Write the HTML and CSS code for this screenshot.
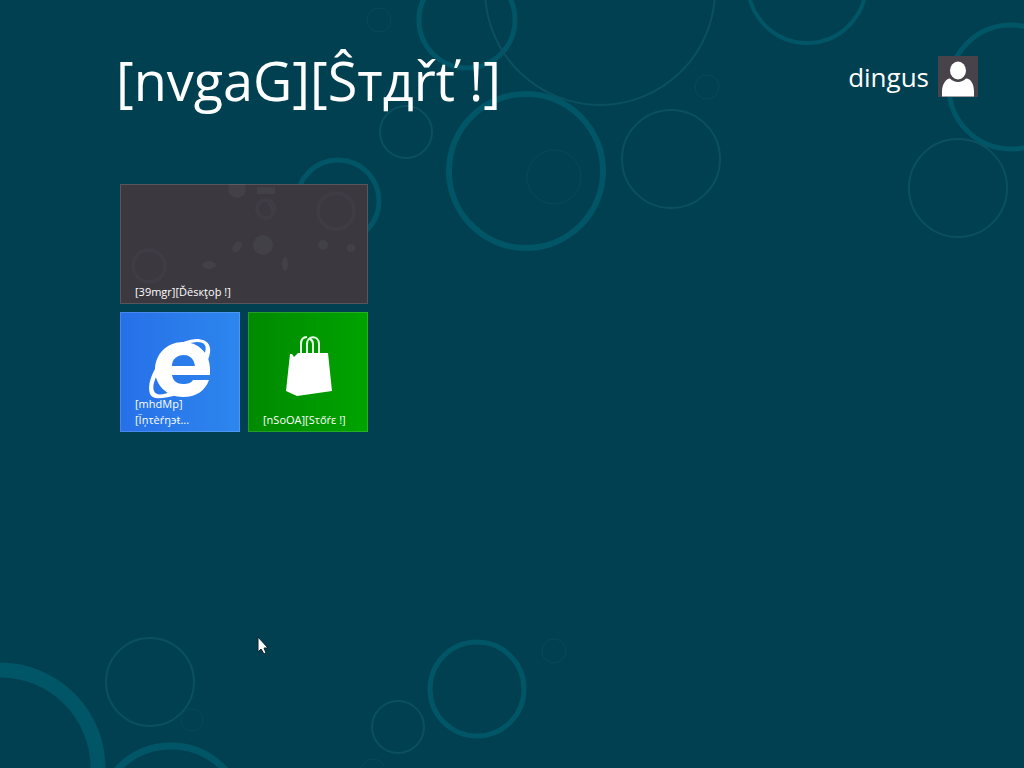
FILE: index.html
```html
<!DOCTYPE html>
<html lang="en">
<head>
    <meta charset="UTF-8">
    <meta name="viewport" content="width=device-width, initial-scale=1.0">
    <title>Start</title>
    <link rel="stylesheet" href="styles.css">
</head>
<body>
    <!-- Bubble wallpaper -->
    <svg class="wallpaper" viewBox="0 0 1024 768" preserveAspectRatio="xMidYMid slice" aria-hidden="true">
        <g class="bubble-bold">
            <circle cx="467" cy="20" r="48" stroke-width="5"/>
            <circle cx="526" cy="171" r="77" stroke-width="6"/>
            <circle cx="807" cy="-16" r="59" stroke-width="4"/>
            <circle cx="1011" cy="87" r="62" stroke-width="5"/>
            <circle cx="338" cy="201" r="41" stroke-width="5"/>
            <circle cx="0" cy="768" r="98" stroke-width="15"/>
            <circle cx="171" cy="819" r="73" stroke-width="7"/>
            <circle cx="477" cy="689" r="47" stroke-width="5"/>
        </g>
        <g class="bubble-thin">
            <circle cx="600" cy="-10" r="115"/>
            <circle cx="406" cy="132" r="26"/>
            <circle cx="671" cy="159" r="49"/>
            <circle cx="958" cy="188" r="49"/>
            <circle cx="150" cy="682" r="44"/>
            <circle cx="398" cy="727" r="26"/>
        </g>
        <g class="bubble-faint">
            <circle cx="379" cy="20" r="12"/>
            <circle cx="554" cy="177" r="27"/>
            <circle cx="707" cy="87" r="12"/>
            <circle cx="192" cy="720" r="11"/>
            <circle cx="554" cy="651" r="12"/>
            <circle cx="373" cy="771" r="12"/>
        </g>
    </svg>

    <div class="screen">
        <header class="header">
            <h1>[nvgaG][Ŝтдřť !]</h1>
            <button type="button" class="user">
                <span>dingus</span>
                <svg class="avatar" viewBox="0 0 40 40" aria-hidden="true">
                    <path d="M4 40V35C4 28 8 22 12 22C16 26.500 24 26.500 28 22C33 22 36 28 36 35V40Z"/>
                    <ellipse cx="20" cy="14" rx="8" ry="9"/>
                </svg>
            </button>
        </header>

        <main class="tiles">
            <a href="#" class="tile desktop">
                <svg class="tile-icon" viewBox="0 0 248 120" aria-hidden="true">
                    <circle cx="117" cy="5" r="9"/>
                    <circle cx="143" cy="61" r="10"/>
                    <ellipse cx="117" cy="63" rx="4" ry="6" transform="rotate(35 117 63)"/>
                    <ellipse cx="89" cy="81" rx="7" ry="4"/>
                    <ellipse cx="165" cy="80" rx="3" ry="7"/>
                    <circle cx="203" cy="61" r="5"/>
                    <circle cx="231" cy="64" r="4"/>
                    <path d="M137 3h18v7h-18zM146 17q14 8 2 20q8-10-2-20z"/>
                    <circle class="ring" cx="29" cy="82" r="16"/>
                    <circle class="ring" cx="216" cy="27" r="18"/>
                    <circle class="ring" cx="146" cy="25" r="9"/>
                </svg>
                <span class="label">[39mgr][Ďēsкţoþ !]</span>
            </a>
            <a href="#" class="tile internet">
                <svg class="tile-icon" viewBox="0 0 120 120" aria-hidden="true">
                    <path fill-rule="evenodd" d="M63 30C79 30 90 42 90 57V63H52C53 69 57 72 63 72C68 72 71 71 73 68H89C85 79 76 85 63 85C47 85 35 73 35 58C35 42 47 30 63 30ZM52 54H75C74 47 70 43 64 43C57 43 52 47 52 54Z"/>
                    <path d="M37 51C47 37 62 28 76 27C90 27 93 36 88 48L84 43C88 34 85 30 77 30C63 31 48 38 37 51Z"/>
                    <path d="M42 47C31 60 27 74 30 82C33 89 44 86 58 83L53 79C43 83 36 84 34 79C32 74 35 66 39 60Z"/>
                </svg>
                <span class="label">[mhdMp]<br>[Ĩņτèŕŋэŧ...</span>
            </a>
            <a href="#" class="tile store">
                <svg class="tile-icon" viewBox="0 0 120 120" aria-hidden="true">
                    <path d="M42 42L44 42L46 45L50 41H80L84 79L49 84L38 79Z"/>
                    <path class="handle" d="M53 41V32C53 27 55 25 59 25M59 41V32C59 23 71 23 71 32V41M65 41V32C65 29 64 28 62 27"/>
                </svg>
                <span class="label">[nSoOA][Sτőŕε !]</span>
            </a>
        </main>
    </div>

    <svg class="cursor" viewBox="0 0 12 19" aria-hidden="true">
        <path d="M1 1V16L4 13L7 18L9 17L7 12H11Z"/>
    </svg>
</body>
</html>
```
FILE: styles.css
```css
* {
    box-sizing: border-box;
}
body {
    margin: 0;
    min-height: 100vh;
    overflow: hidden;
    background: #004050;
    color: #fff;
    font-family: "Segoe UI", "Open Sans", "Noto Sans", sans-serif;
}
.wallpaper {
    position: absolute;
    top: 0;
    left: 0;
    width: 100%;
    height: 100%;
    z-index: -1;
    fill: none;
}
.bubble-bold {
    stroke: #005566;
}
.bubble-thin {
    stroke: #0b5060;
    stroke-width: 2;
}
.bubble-faint {
    stroke: #084858;
    stroke-width: 1;
}
.screen {
    padding: 44px 46px 0 120px;
}
.header {
    display: flex;
    justify-content: space-between;
    align-items: flex-start;
    height: 140px;
}
h1 {
    margin: 0 0 0 -4px;
    font-size: 54px;
    font-weight: 400;
    line-height: 72px;
    white-space: nowrap;
}
.user {
    display: flex;
    align-items: center;
    gap: 9px;
    margin-top: 12px;
    padding: 0;
    border: none;
    background: none;
    color: #fff;
    font-family: inherit;
    font-size: 26px;
    line-height: 40px;
    cursor: pointer;
}
.avatar {
    width: 40px;
    height: 41px;
    background: #48434a;
    fill: #fff;
}
.tiles {
    display: grid;
    grid-template-columns: 120px 120px;
    grid-auto-rows: 120px;
    gap: 8px;
}

/* Icon and label share one cell */
.tile {
    display: grid;
    grid-template: 100% / 100%;
    color: #fff;
    text-decoration: none;
    outline: 1px solid rgba(255, 255, 255, 0.15);
    outline-offset: -1px;
}
.tile-icon,
.label {
    grid-area: 1 / 1;
}
.tile-icon {
    width: 100%;
    height: 100%;
    fill: #fff;
}
.label {
    align-self: end;
    padding: 0 0 4px 15px;
    font-size: 11px;
    line-height: 16px;
    white-space: nowrap;
}
.desktop {
    grid-column: span 2;
    background: #3b383f;
}
.desktop .tile-icon {
    fill: #434148;
}
.desktop .ring {
    fill: none;
    stroke: #3f3c45;
    stroke-width: 4;
}
.internet {
    background: linear-gradient(to right, #2770e8, #2d86ee);
}
.store {
    background: linear-gradient(to right, #008a00, #00a300);
}
.store .handle {
    fill: none;
    stroke: #e4ffe4;
    stroke-width: 2;
}
.cursor {
    position: absolute;
    top: 636px;
    left: 257px;
    width: 12px;
    height: 19px;
    fill: #fff;
    stroke: #10202a;
    stroke-width: 1;
}
```
